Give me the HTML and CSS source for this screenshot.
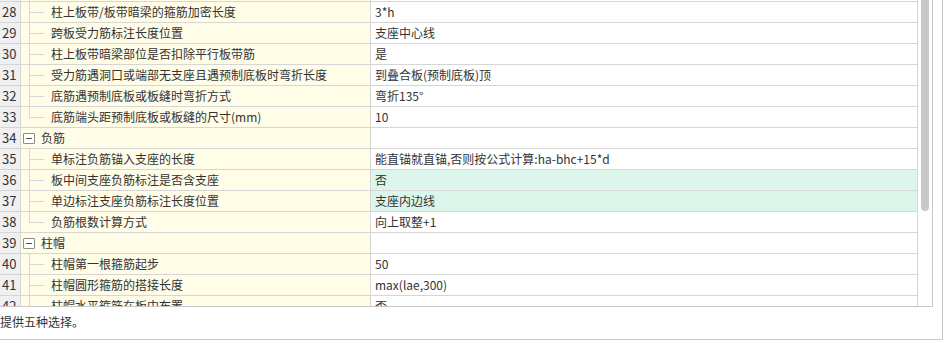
FILE: index.html
```html
<!DOCTYPE html>
<html lang="zh-CN">
<head>
<meta charset="utf-8">
<title>属性</title>
<link rel="stylesheet" href="styles.css">
</head>
<body>
<div class="panel">
  <div class="grid-wrap">
    <div class="viewport">
      <div class="rows">
        <div class="row"><div class="num"></div><div class="name child"><span class="guide"></span></div><div class="val"></div></div>
        <div class="row"><div class="num">28</div><div class="name child"><span class="guide"></span>柱上板带/板带暗梁的箍筋加密长度</div><div class="val">3*h</div></div>
        <div class="row"><div class="num">29</div><div class="name child"><span class="guide"></span>跨板受力筋标注长度位置</div><div class="val">支座中心线</div></div>
        <div class="row"><div class="num">30</div><div class="name child"><span class="guide"></span>柱上板带暗梁部位是否扣除平行板带筋</div><div class="val">是</div></div>
        <div class="row"><div class="num">31</div><div class="name child"><span class="guide"></span>受力筋遇洞口或端部无支座且遇预制底板时弯折长度</div><div class="val">到叠合板(预制底板)顶</div></div>
        <div class="row"><div class="num">32</div><div class="name child"><span class="guide"></span>底筋遇预制底板或板缝时弯折方式</div><div class="val">弯折135°</div></div>
        <div class="row"><div class="num">33</div><div class="name child"><span class="guide last"></span>底筋端头距预制底板或板缝的尺寸(mm)</div><div class="val">10</div></div>
        <div class="row"><div class="num">34</div><div class="name group"><span class="toggle"></span>负筋</div><div class="val"></div></div>
        <div class="row"><div class="num">35</div><div class="name child"><span class="guide"></span>单标注负筋锚入支座的长度</div><div class="val">能直锚就直锚,否则按公式计算:ha-bhc+15*d</div></div>
        <div class="row"><div class="num">36</div><div class="name child"><span class="guide"></span>板中间支座负筋标注是否含支座</div><div class="val hl">否</div></div>
        <div class="row"><div class="num">37</div><div class="name child"><span class="guide"></span>单边标注支座负筋标注长度位置</div><div class="val hl">支座内边线</div></div>
        <div class="row"><div class="num">38</div><div class="name child"><span class="guide last"></span>负筋根数计算方式</div><div class="val">向上取整+1</div></div>
        <div class="row"><div class="num">39</div><div class="name group"><span class="toggle"></span>柱帽</div><div class="val"></div></div>
        <div class="row"><div class="num">40</div><div class="name child"><span class="guide"></span>柱帽第一根箍筋起步</div><div class="val">50</div></div>
        <div class="row"><div class="num">41</div><div class="name child"><span class="guide"></span>柱帽圆形箍筋的搭接长度</div><div class="val">max(lae,300)</div></div>
        <div class="row"><div class="num">42</div><div class="name child"><span class="guide"></span>柱帽水平箍筋在板中布置</div><div class="val">否</div></div>
      </div>
    </div>
    <div class="scrollbar"><div class="thumb"></div></div>
  </div>
  <div class="desc">提供五种选择。</div>
</div>
</body>
</html>
```
FILE: styles.css
```css
html, body {
  margin: 0;
  padding: 0;
  background: #ffffff;
}
body {
  width: 946px;
  height: 343px;
  overflow: hidden;
  font-family: "Noto Sans CJK SC", "Noto Sans", sans-serif;
  font-size: 12px;
  color: #333333;
}
.panel {
  width: 942px;
  height: 339px;
  border-right: 1px solid #c8c8c8;
  border-bottom: 1px solid #c8c8c8;
  display: flex;
  flex-direction: column;
}
.grid-wrap {
  width: 932px;
  height: 306px;
  border-right: 1px solid #c8c8c8;
  border-bottom: 1px solid #c8c8c8;
  display: flex;
  flex: none;
}
.viewport {
  width: 918px;
  height: 306px;
  overflow: hidden;
  flex: none;
}
.rows {
  margin-top: -19px;
}
.row {
  display: grid;
  grid-template-columns: 21px 350px 547px;
  height: 21px;
}
.row > div {
  border-right: 1px solid #d6d6d6;
  border-bottom: 1px solid #d6d6d6;
  display: flex;
  align-items: center;
  white-space: nowrap;
  overflow: hidden;
  line-height: 20px;
}
.num {
  background: #f0f0f0;
  font-size: 13px;
  padding-left: 2px;
  color: #333333;
}
.name {
  background: #fffce8;
}
.name.group {
  padding-left: 0;
}
.val {
  background: #ffffff;
  padding-left: 4px;
}
.val.hl {
  background: #ddf6ec;
}
.guide {
  width: 30px;
  align-self: stretch;
  flex: none;
  background:
    linear-gradient(#d8d8d8, #d8d8d8) 8px 0 / 1px 100% no-repeat,
    linear-gradient(#d8d8d8, #d8d8d8) 8px 10px / 15px 1px no-repeat;
}
.guide.last {
  background:
    linear-gradient(#d8d8d8, #d8d8d8) 8px 0 / 1px 11px no-repeat,
    linear-gradient(#d8d8d8, #d8d8d8) 8px 10px / 15px 1px no-repeat;
}
.toggle {
  flex: none;
  box-sizing: border-box;
  width: 12px;
  height: 11px;
  margin-left: 2px;
  margin-right: 6px;
  border: 1px solid #8c8c8c;
  border-radius: 1px;
  background: linear-gradient(#555555, #555555) center / 6px 1px no-repeat #ffffff;
}
.scrollbar {
  width: 14px;
  height: 306px;
  overflow: hidden;
  flex: none;
}
.thumb {
  width: 8px;
  height: 250px;
  margin-left: 3px;
  margin-top: -39px;
  background: #c8c8c8;
  border-radius: 4px;
}
.desc {
  padding-top: 6px;
  line-height: 18px;
  font-size: 12px;
  color: #333333;
}
```
